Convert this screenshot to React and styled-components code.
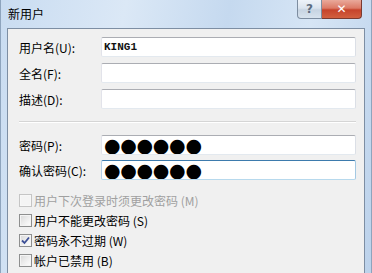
import React from "react";
import styled, { createGlobalStyle } from "styled-components";

// GLOBAL

const GlobalStyle = createGlobalStyle`
  html, body {
    margin: 0;
    padding: 0;
  }
  body {
    width: 372px;
    height: 273px;
    overflow: hidden;
    font-family: "Noto Sans CJK SC", "Noto Sans", sans-serif;
  }
`;

// STYLED COMPONENTS

const Window = styled.div`
  width: 372px;
  height: 273px;
  box-sizing: border-box;
  display: flex;
  flex-direction: column;
  overflow: hidden;
  border-left: 1px solid #8ea4bd;
  border-right: 1px solid #8ea4bd;
  background: linear-gradient(
    100deg,
    #c9dcf1 0%,
    #dbe8f6 30%,
    #c5d9ef 55%,
    #d6e5f5 75%,
    #bcd2eb 100%
  );
`;

const TitleBar = styled.div`
  height: 28px;
  flex-shrink: 0;
  display: flex;
  align-items: flex-start;
  justify-content: space-between;
  padding: 0 9px 0 7px;
`;

const Title = styled.div`
  font-size: 12px;
  line-height: 27px;
  color: #000;
`;

const CaptionButtons = styled.div`
  display: flex;
`;

const CaptionButton = styled.div`
  height: 19px;
  box-sizing: border-box;
  display: flex;
  align-items: center;
  justify-content: center;
  border: 1px solid ${(p) => (p.$close ? "#7a3a30" : "#7d8da0")};
  border-top: none;
  width: ${(p) => (p.$close ? "40px" : "25px")};
  border-radius: ${(p) => (p.$close ? "0 0 4px 0" : "0 0 0 4px")};
  border-left: ${(p) => (p.$close ? "none" : "1px solid #7d8da0")};
  background: ${(p) =>
    p.$close
      ? "linear-gradient(180deg, #e9a99b 0%, #dc7a66 45%, #c6432b 55%, #d2603f 100%)"
      : "linear-gradient(180deg, #eef3f9 0%, #dbe4ee 45%, #c7d4e2 55%, #d8e3ee 100%)"};
  color: ${(p) => (p.$close ? "#fff" : "#5d6d80")};
  font-family: "DejaVu Sans", sans-serif;
  font-weight: bold;
  font-size: 12px;
`;

const Client = styled.div`
  flex: 1;
  margin: 0 6px;
  border: 1px solid #7d8ea3;
  border-bottom: none;
  background: #f0f0f0;
  padding: 8px 8px 0 11px;
  display: flex;
  flex-direction: column;
`;

const FieldGroup = styled.div`
  display: flex;
  flex-direction: column;
  gap: ${(p) => p.$gap}px;
`;

const FieldRow = styled.div`
  display: grid;
  grid-template-columns: 82px 1fr;
  align-items: center;
  height: 20px;
`;

const Label = styled.div`
  font-size: 12px;
  color: #000;
  white-space: nowrap;
`;

const TextBox = styled.div`
  height: 20px;
  box-sizing: border-box;
  background: #fff;
  border: 1px solid;
  border-color: ${(p) =>
    p.$focused
      ? "#3d7bad #a4c9e3 #b7d9ed #b5cfe7"
      : "#abadb3 #dbdfe6 #e3e9ef #e2e3ea"};
  border-radius: 2px;
  padding-left: 2px;
  display: flex;
  align-items: center;
  overflow: hidden;
`;

const TextValue = styled.span`
  font-family: "Liberation Mono", monospace;
  font-size: 11px;
  font-weight: bold;
  color: #111;
`;

const Dots = styled.span`
  font-family: "DejaVu Sans", sans-serif;
  font-size: 19px;
  line-height: 18px;
  letter-spacing: -0.3px;
  color: #000;
`;

const Separator = styled.div`
  margin: 12px 0;
  height: 0;
  border-top: 1px solid #d5d5d5;
  border-bottom: 1px solid #ffffff;
`;

const CheckList = styled.div`
  margin-top: 10px;
  display: flex;
  flex-direction: column;
`;

const CheckRow = styled.div`
  height: 20px;
  display: flex;
  align-items: center;
  gap: 2px;
  font-size: 12px;
  color: ${(p) => (p.$disabled ? "#a0a0a0" : "#000")};
  white-space: nowrap;
`;

const Box = styled.span`
  width: 13px;
  height: 13px;
  box-sizing: border-box;
  flex-shrink: 0;
  border: 1px solid ${(p) => (p.$disabled ? "#c5c5c5" : "#8e8f8f")};
  background: ${(p) =>
    p.$disabled
      ? "#f4f4f4"
      : "linear-gradient(135deg, #d7d7d7 0%, #ededed 50%, #ffffff 100%)"};
  box-shadow: inset 0 0 0 1px ${(p) => (p.$disabled ? "#f7f7f7" : "#f4f4f4")};
  display: flex;
  align-items: center;
  justify-content: center;
`;

function CheckBox({ checked, disabled }) {
  return (
    <Box $disabled={disabled}>
      {checked ? (
        <svg width="9" height="9" viewBox="0 0 9 9">
          <path
            d="M1 4.5 L3.5 7 L8 1.5"
            fill="none"
            stroke="#3c4f96"
            strokeWidth="1.8"
          />
        </svg>
      ) : null}
    </Box>
  );
}

const checks = [
  { text: "用户下次登录时须更改密码 (M)", disabled: true },
  { text: "用户不能更改密码 (S)" },
  { text: "密码永不过期 (W)", checked: true },
  { text: "帐户已禁用 (B)" }
];

export default function App() {
  return (
    <>
      <GlobalStyle />
      <Window>
        <TitleBar>
          <Title>新用户</Title>
          <CaptionButtons>
            <CaptionButton>?</CaptionButton>
            <CaptionButton $close>✕</CaptionButton>
          </CaptionButtons>
        </TitleBar>
        <Client>
          <FieldGroup $gap={6}>
            <FieldRow>
              <Label>用户名(U):</Label>
              <TextBox>
                <TextValue>KING1</TextValue>
              </TextBox>
            </FieldRow>
            <FieldRow>
              <Label>全名(F):</Label>
              <TextBox />
            </FieldRow>
            <FieldRow>
              <Label>描述(D):</Label>
              <TextBox />
            </FieldRow>
          </FieldGroup>
          <Separator />
          <FieldGroup $gap={5}>
            <FieldRow>
              <Label>密码(P):</Label>
              <TextBox>
                <Dots>●●●●●●</Dots>
              </TextBox>
            </FieldRow>
            <FieldRow>
              <Label>确认密码(C):</Label>
              <TextBox $focused>
                <Dots>●●●●●●</Dots>
              </TextBox>
            </FieldRow>
          </FieldGroup>
          <CheckList>
            {checks.map((c) => (
              <CheckRow key={c.text} $disabled={c.disabled}>
                <CheckBox checked={c.checked} disabled={c.disabled} />
                {c.text}
              </CheckRow>
            ))}
          </CheckList>
        </Client>
      </Window>
    </>
  );
}
